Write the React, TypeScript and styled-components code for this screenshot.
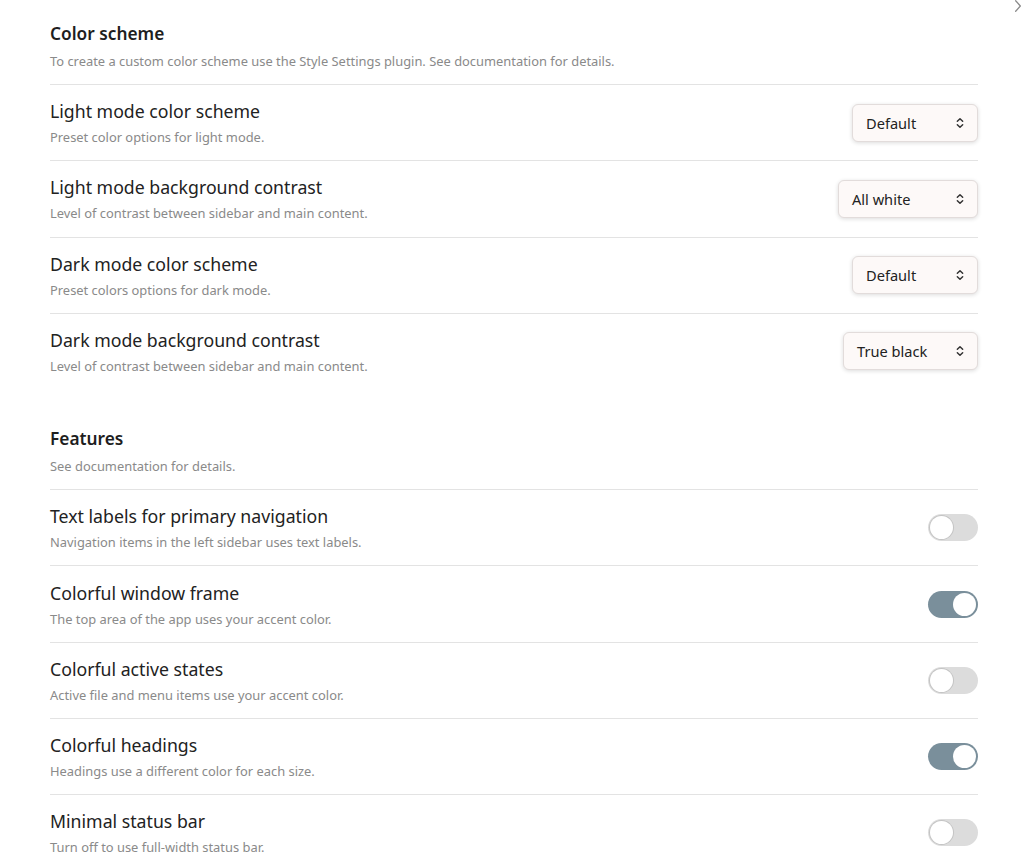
import styled, { createGlobalStyle } from 'styled-components';

const GlobalStyle = createGlobalStyle`
  html, body {
    margin: 0;
    padding: 0;
    background: #ffffff;
    font-family: "Noto Sans", "Open Sans", sans-serif;
    color: #222222;
  }
  * { box-sizing: border-box; }
`;

const Page = styled.div`
  position: relative;
  width: 1021px;
  height: 855px;
  overflow: hidden;
  padding: 23px 43px 0 50px;
`;

const CollapseArrow = styled.div`
  position: absolute;
  top: -4px;
  right: -4px;
  width: 14px;
  height: 14px;
`;

const Section = styled.section<{ $spaced?: boolean }>`
  margin-top: ${(p) => (p.$spaced ? '39px' : '0')};
`;

const SectionHeader = styled.div`
  padding-bottom: 14px;
  border-bottom: 1px solid #e3e3e3;
`;

const SectionTitle = styled.h2`
  margin: 0;
  font-size: 17.3px;
  font-weight: 600;
  line-height: 22px;
  color: #1e1e1e;
`;

const Description = styled.div`
  margin-top: 7px;
  font-size: 12.9px;
  line-height: 18px;
  color: #8a8a8a;
`;

const Row = styled.div<{ $last?: boolean }>`
  display: flex;
  align-items: center;
  justify-content: space-between;
  padding: 14.15px 0;
  border-bottom: ${(p) => (p.$last ? 'none' : '1px solid #e3e3e3')};
`;

const Info = styled.div`
  display: flex;
  flex-direction: column;
`;

const RowTitle = styled.div`
  font-size: 17.7px;
  line-height: 24px;
  color: #222222;
`;

const RowDesc = styled(Description)`
  margin-top: 5px;
`;

const Select = styled.div<{ $width: number }>`
  width: ${(p) => p.$width}px;
  height: 38px;
  display: flex;
  align-items: center;
  justify-content: space-between;
  padding: 0 9px 0 13px;
  background: #fdf9f8;
  border: 1px solid #e2dcdb;
  border-radius: 6px;
  box-shadow: 0 1px 4px rgba(0, 0, 0, 0.14);
  font-size: 14.6px;
  color: #222222;
`;

const Toggle = styled.div<{ $on: boolean }>`
  position: relative;
  width: 50px;
  height: 27px;
  border-radius: 14px;
  background: ${(p) => (p.$on ? '#7a8f9b' : '#dcdcdc')};
  flex-shrink: 0;

  &::after {
    content: '';
    position: absolute;
    top: 2px;
    left: ${(p) => (p.$on ? '25px' : '2px')};
    width: 23px;
    height: 23px;
    border-radius: 50%;
    background: #ffffff;
    box-shadow: ${(p) => (p.$on ? 'none' : '0 0 0 1px #c4c4c4')};
  }
`;

const UpDown = () => (
  <svg width="16" height="16" viewBox="0 0 24 24" fill="none" stroke="#333" strokeWidth="2.2" strokeLinecap="round" strokeLinejoin="round">
    <path d="M8 9.5l4-4 4 4" />
    <path d="M8 14.5l4 4 4-4" />
  </svg>
);

const selects = [
  { title: 'Light mode color scheme', desc: 'Preset color options for light mode.', value: 'Default', width: 126 },
  { title: 'Light mode background contrast', desc: 'Level of contrast between sidebar and main content.', value: 'All white', width: 140 },
  { title: 'Dark mode color scheme', desc: 'Preset colors options for dark mode.', value: 'Default', width: 126 },
  { title: 'Dark mode background contrast', desc: 'Level of contrast between sidebar and main content.', value: 'True black', width: 135 },
];

const toggles = [
  { title: 'Text labels for primary navigation', desc: 'Navigation items in the left sidebar uses text labels.', on: false },
  { title: 'Colorful window frame', desc: 'The top area of the app uses your accent color.', on: true },
  { title: 'Colorful active states', desc: 'Active file and menu items use your accent color.', on: false },
  { title: 'Colorful headings', desc: 'Headings use a different color for each size.', on: true },
  { title: 'Minimal status bar', desc: 'Turn off to use full-width status bar.', on: false },
];

export default function App() {
  return (
    <Page>
      <GlobalStyle />
      <CollapseArrow>
        <svg width="14" height="14" viewBox="0 0 24 24" fill="none" stroke="#8a8a8a" strokeWidth="2.2" strokeLinecap="round" strokeLinejoin="round">
          <path d="M8 3l8 9-8 9" />
        </svg>
      </CollapseArrow>

      <Section>
        <SectionHeader>
          <SectionTitle>Color scheme</SectionTitle>
          <Description>
            To create a custom color scheme use the Style Settings plugin. See documentation for details.
          </Description>
        </SectionHeader>
        {selects.map((s, i) => (
          <Row key={s.title} $last={i === selects.length - 1}>
            <Info>
              <RowTitle>{s.title}</RowTitle>
              <RowDesc>{s.desc}</RowDesc>
            </Info>
            <Select $width={s.width}>
              <span>{s.value}</span>
              <UpDown />
            </Select>
          </Row>
        ))}
      </Section>

      <Section $spaced>
        <SectionHeader>
          <SectionTitle>Features</SectionTitle>
          <Description>See documentation for details.</Description>
        </SectionHeader>
        {toggles.map((t) => (
          <Row key={t.title}>
            <Info>
              <RowTitle>{t.title}</RowTitle>
              <RowDesc>{t.desc}</RowDesc>
            </Info>
            <Toggle $on={t.on} />
          </Row>
        ))}
      </Section>
    </Page>
  );
}
